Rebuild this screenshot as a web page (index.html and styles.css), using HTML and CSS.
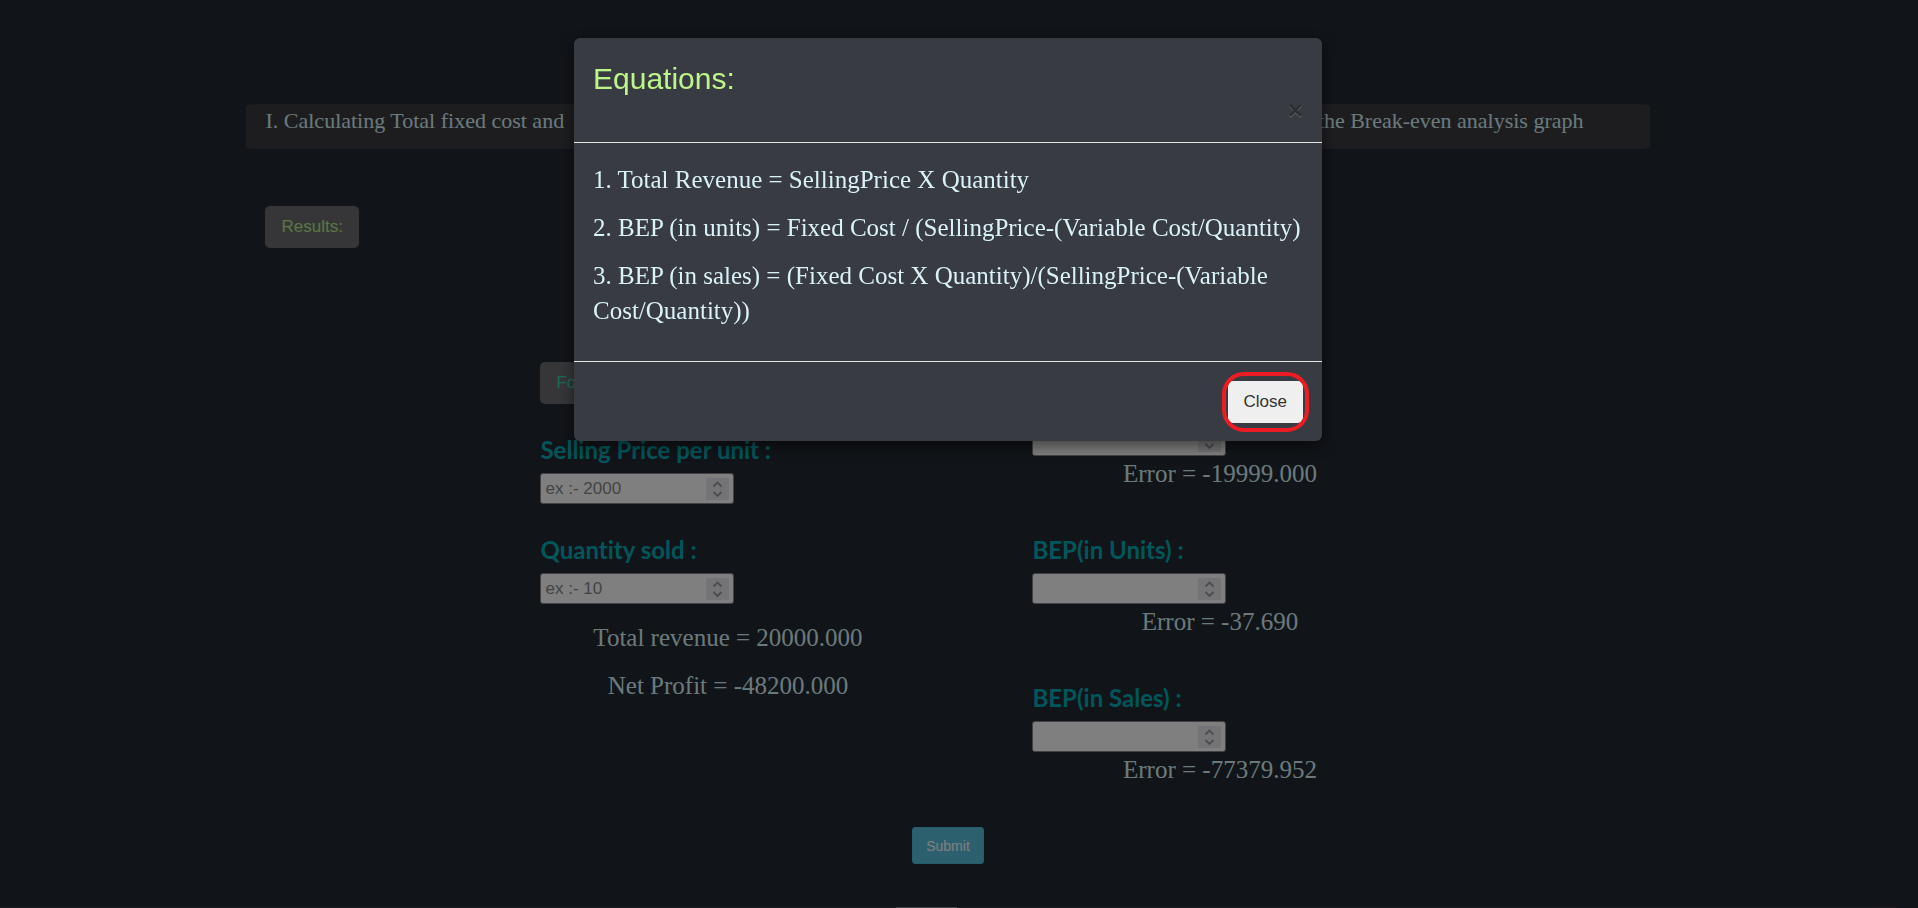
FILE: index.html
```
<!DOCTYPE html>
<html lang="en">
<head>
<meta charset="utf-8">
<meta name="viewport" content="width=device-width, initial-scale=1">
<title>Break-even Analysis</title>
<link rel="stylesheet" href="styles.css">
</head>
<body>
<svg class="sprite" aria-hidden="true">
  <symbol id="stepper" viewBox="0 0 23 22">
    <path d="M7.500 8.500 11.500 4.500 15.500 8.500M7.500 14l4 4 4-4" fill="none" stroke="currentColor" stroke-width="1.800"/>
  </symbol>
</svg>
<main class="page">
  <section class="banner">
    <p class="banner-text"><span>I. Calculating Total fixed cost and</span><span>the Break-even analysis graph</span></p>
  </section>
  <button class="btn btn-results" type="button">Results:</button>
  <form class="form">
    <div class="columns">
      <div class="column">
        <button class="btn btn-formula" type="button">Formula</button>
        <div class="field">
          <label for="price">Selling Price per unit :</label>
          <div class="number"><input id="price" type="number" placeholder="ex :- 2000"><svg class="stepper"><use href="#stepper"/></svg></div>
        </div>
        <div class="field">
          <label for="quantity">Quantity sold :</label>
          <div class="number"><input id="quantity" type="number" placeholder="ex :- 10"><svg class="stepper"><use href="#stepper"/></svg></div>
        </div>
        <div class="totals">
          <p>Total revenue = 20000.000</p>
          <p>Net Profit = -48200.000</p>
        </div>
      </div>
      <div class="column column-right">
        <div class="field">
          <label for="revenue">Total Revenue :</label>
          <div class="number"><input id="revenue" type="number"><svg class="stepper"><use href="#stepper"/></svg></div>
          <p class="error">Error = -19999.000</p>
        </div>
        <div class="field">
          <label for="units">BEP(in Units) :</label>
          <div class="number"><input id="units" type="number"><svg class="stepper"><use href="#stepper"/></svg></div>
          <p class="error">Error = -37.690</p>
        </div>
        <div class="field">
          <label for="sales">BEP(in Sales) :</label>
          <div class="number"><input id="sales" type="number"><svg class="stepper"><use href="#stepper"/></svg></div>
          <p class="error">Error = -77379.952</p>
        </div>
      </div>
    </div>
    <button class="submit" type="button">Submit</button>
  </form>
</main>
<footer class="site-footer"><button class="footer-tab" type="button" aria-label="More"></button></footer>
<div class="backdrop">
  <div class="modal" role="dialog" aria-modal="true" aria-labelledby="modal-title">
    <header class="modal-header">
      <h2 id="modal-title">Equations:</h2>
      <button class="dismiss" type="button" aria-label="Dismiss">×</button>
    </header>
    <div class="modal-body">
      <p>1. Total Revenue = SellingPrice X Quantity</p>
      <p>2. BEP (in units) = Fixed Cost / (SellingPrice-(Variable Cost/Quantity)</p>
      <p>3. BEP (in sales) = (Fixed Cost X Quantity)/(SellingPrice-(Variable Cost/Quantity))</p>
    </div>
    <footer class="modal-footer">
      <button class="btn btn-close" type="button">Close</button>
    </footer>
  </div>
</div>
</body>
</html>
```
FILE: styles.css
```
* { box-sizing: border-box; }

html { overflow: hidden; }

body {
  margin: 0;
  padding-right: 22px;
  background: #222831;
  color: #d9f2f7;
  font-family: "Liberation Serif", "Times New Roman", serif;
  font-size: 25px;
  line-height: 35px;
}

p, h2 { margin: 0; }
button, input { font-family: "Liberation Sans", Arial, sans-serif; }
.sprite { display: none; }

.page {
  width: 74%;
  margin: 0 auto;
  padding-top: 104px;
}

.banner {
  padding: 0 19px;
  height: 45px;
  background: #3a3b40;
  border-radius: 16px / 2px;
}

.banner-text {
  display: flex;
  justify-content: space-between;
  padding-right: 47px;
  font-size: 22px;
  line-height: 33px;
}

.btn {
  height: 42px;
  padding: 0 16px;
  border: 0;
  border-radius: 5px;
  background: #6c6d73;
  font-size: 17px;
}

.btn-results { display: block; margin: 57px 0 0 19px; color: #b4ee84; }
.btn-formula { align-self: flex-start; margin-bottom: 31px; color: #2fd9b0; }

.form {
  display: flex;
  flex-direction: column;
  margin-top: 114px;
}

.columns {
  display: grid;
  grid-template-columns: 375px 375px;
  column-gap: 117px;
  padding-left: 294px;
}

.column { display: flex; flex-direction: column; }
.column .field { margin-bottom: 31px; }
.totals { margin-top: -15px; }
.column-right { padding-top: 25px; gap: 44px; }
.column-right .field { margin-bottom: 0; }

.field label {
  display: block;
  height: 38px;
  color: #00adb5;
  font-family: "Trebuchet MS", Lato, sans-serif;
  font-size: 24px;
  font-variant-ligatures: none;
  font-weight: 700;
  line-height: 30px;
}

.number { position: relative; width: 194px; }

.number input {
  display: block;
  width: 100%;
  height: 31px;
  padding: 0 4px;
  border: 1px solid #85858d;
  border-radius: 3px;
  background: #fff;
  font-size: 17px;
  appearance: textfield;
}

.number input::placeholder { color: #888; }

.stepper {
  position: absolute;
  top: 5px;
  right: 5px;
  width: 23px;
  height: 22px;
  background: #e8e8ec;
  color: #98989e;
}

.error, .totals { text-align: center; }
.totals p { margin-bottom: 13px; }

.submit {
  align-self: center;
  height: 37px;
  margin-top: 40px;
  padding: 0 13px;
  border: 1px solid #46b8da;
  border-radius: 3px;
  background: #5bc0de;
  color: #fff;
  font-size: 14px;
}

.site-footer {
  display: flex;
  justify-content: center;
  margin-top: 43px;
  padding-right: 44px;
  background: #3a3b40;
}

.footer-tab {
  width: 61px;
  height: 37px;
  padding: 0;
  border: 0;
  background: #8a8a90;
}

.backdrop {
  position: fixed;
  inset: 0;
  padding: 38px 22px 0 0;
  background: rgba(0, 0, 0, 0.5);
}

.modal {
  width: 748px;
  max-width: 100%;
  margin: 0 auto;
  border-radius: 6px;
  background: #393b42;
  box-shadow: 0 5px 15px rgba(0, 0, 0, 0.5);
}

.modal-header {
  padding: 19px 19px 22px;
  border-bottom: 1px solid #e5e5e5;
}

.modal-header h2 {
  color: #bdf58b;
  font-family: "Liberation Sans", Arial, sans-serif;
  font-size: 30px;
  font-weight: 400;
  line-height: 43px;
}

.dismiss {
  display: block;
  margin-left: auto;
  padding: 0;
  border: 0;
  background: none;
  color: #000;
  font-size: 26px;
  font-weight: 700;
  line-height: 20px;
  text-shadow: 0 1px 0 #fff;
  opacity: 0.2;
}

.modal-body { padding: 19px 19px 20px; }
.modal-body p { margin-bottom: 13px; }

.modal-footer {
  display: flex;
  justify-content: flex-end;
  padding: 19px 19px 18px;
  border-top: 1px solid #e5e5e5;
}

.btn-close {
  position: relative;
  background: #efefef;
  color: #333;
}

.btn-close::after {
  content: "";
  position: absolute;
  inset: -9px -6px;
  border: 4px solid #ed1c24;
  border-radius: 22px;
}
```
